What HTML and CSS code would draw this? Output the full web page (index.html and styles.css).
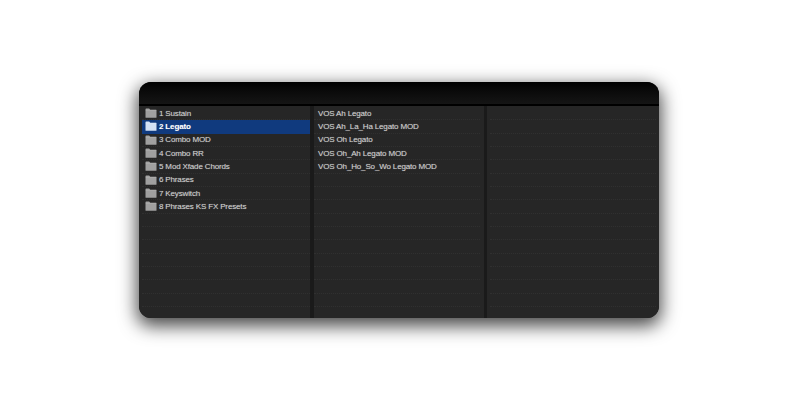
FILE: index.html
```html
<!DOCTYPE html>
<html lang="en">
<head>
<meta charset="utf-8">
<title>Browser</title>
<link rel="stylesheet" href="styles.css">
</head>
<body>
<svg width="0" height="0" class="defs"><defs>
<symbol id="folder" viewBox="0 0 12 10"><path d="M0.5 1.2 Q0.5 0.5 1.2 0.5 H4.2 L5.2 1.7 H11 Q11.5 1.7 11.5 2.2 V9.3 Q11.5 9.8 11 9.8 H1 Q0.5 9.8 0.5 9.3 Z" fill="currentColor"/><rect x="0.5" y="1.8" width="11" height="0.8" fill="#fff" fill-opacity=".18"/></symbol>
</defs></svg>
<main class="window">
  <header class="titlebar"></header>
  <div class="columns">
    <section class="col col-first">
      <div class="row"><svg class="folder"><use href="#folder"/></svg><span>1 Sustain</span></div>
      <div class="row selected"><svg class="folder"><use href="#folder"/></svg><span>2 Legato</span></div>
      <div class="row"><svg class="folder"><use href="#folder"/></svg><span>3 Combo MOD</span></div>
      <div class="row"><svg class="folder"><use href="#folder"/></svg><span>4 Combo RR</span></div>
      <div class="row"><svg class="folder"><use href="#folder"/></svg><span>5 Mod Xfade Chords</span></div>
      <div class="row"><svg class="folder"><use href="#folder"/></svg><span>6 Phrases</span></div>
      <div class="row"><svg class="folder"><use href="#folder"/></svg><span>7 Keyswitch</span></div>
      <div class="row"><svg class="folder"><use href="#folder"/></svg><span>8 Phrases KS FX Presets</span></div>
      <div class="row"></div><div class="row"></div><div class="row"></div><div class="row"></div><div class="row"></div><div class="row"></div><div class="row"></div><div class="row"></div>
    </section>
    <section class="col col-second">
      <div class="row"><span>VOS Ah Legato</span></div>
      <div class="row"><span>VOS Ah_La_Ha Legato MOD</span></div>
      <div class="row"><span>VOS Oh Legato</span></div>
      <div class="row"><span>VOS Oh_Ah Legato MOD</span></div>
      <div class="row"><span>VOS Oh_Ho_So_Wo Legato MOD</span></div>
      <div class="row"></div><div class="row"></div><div class="row"></div><div class="row"></div><div class="row"></div><div class="row"></div><div class="row"></div><div class="row"></div><div class="row"></div><div class="row"></div><div class="row"></div>
    </section>
    <section class="col col-third">
      <div class="row"></div><div class="row"></div><div class="row"></div><div class="row"></div><div class="row"></div><div class="row"></div><div class="row"></div><div class="row"></div><div class="row"></div><div class="row"></div><div class="row"></div><div class="row"></div><div class="row"></div><div class="row"></div><div class="row"></div><div class="row"></div>
    </section>
  </div>
</main>
</body>
</html>
```
FILE: styles.css
```css
html, body {
  margin: 0;
  height: 100%;
  background: #fff;
}
body {
  padding: 82px 0 0 139px;
  box-sizing: border-box;
  overflow: hidden;
}
.defs {
  display: block;
  height: 0;
}
.window {
  width: 520px;
  height: 236px;
  display: flex;
  flex-direction: column;
  border-radius: 12px;
  overflow: hidden;
  background: #1a1a1a;
  box-shadow: 0 6px 18px 2px rgba(0, 0, 0, .72);
  font: 8px/13px "Liberation Sans", Arial, sans-serif;
  letter-spacing: -.15px;
  color: #cfcfcf;
}
.titlebar {
  height: 22px;
  flex: none;
  background: linear-gradient(#000 0, #080808 30%, #151515 100%);
  border-bottom: 2px solid #000;
}
.columns {
  flex: 1;
  min-height: 0;
  display: flex;
  gap: 4px;
}
.col {
  background: #262626;
  overflow: hidden;
  padding-top: 1px;
}
.col-first {
  width: 171px;
  padding-left: 3px;
  box-sizing: border-box;
}
.col-second {
  width: 170px;
}
.col-third {
  flex: 1;
  margin-left: -1px;
  padding-left: 3px;
  padding-right: 3px;
}
.row {
  height: 13.33px;
  box-sizing: border-box;
  display: flex;
  align-items: center;
  gap: 2px;
  white-space: nowrap;
  border-bottom: 1px dotted #303030;
  text-shadow: 0 0 1px rgba(210, 210, 210, .45);
}
.col-second .row {
  padding-left: 4px;
  margin-right: 4px;
}
.folder {
  width: 12px;
  height: 10px;
  margin-left: 3px;
  color: #a0a0a0;
  flex: none;
}
.selected {
  background: #103a7e;
  color: #fff;
  font-weight: bold;
  border-bottom-color: #103a7e;
}
.selected .folder {
  color: #d3e2f6;
}
```
